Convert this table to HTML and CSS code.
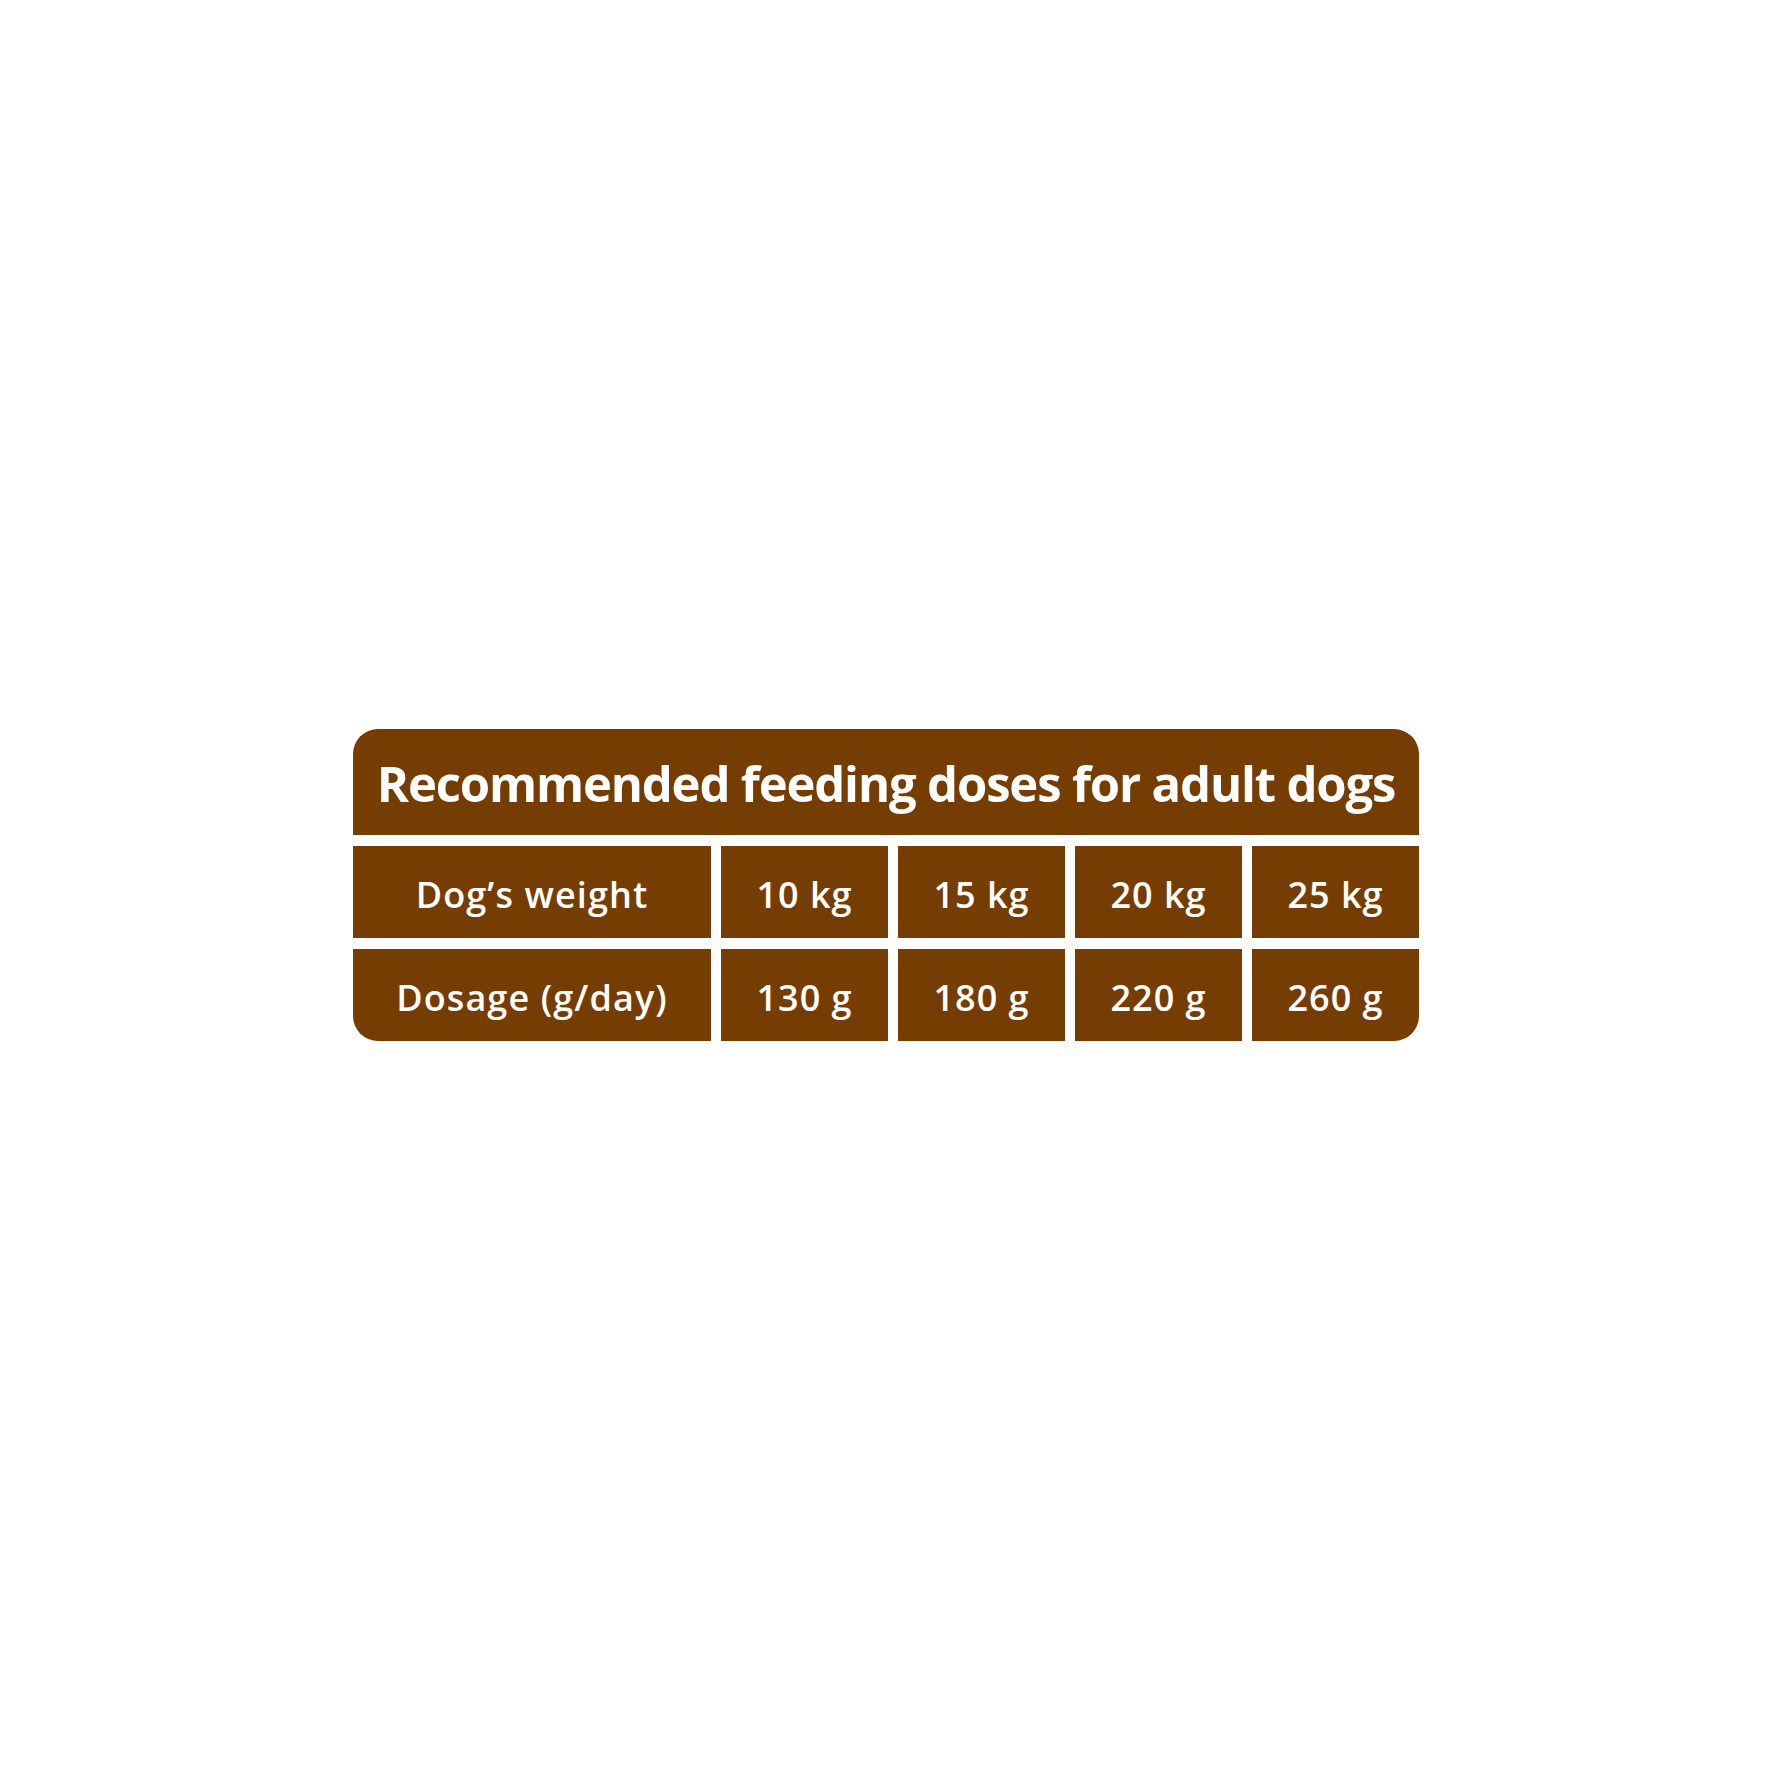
FILE: index.html
```html
<!DOCTYPE html>
<html lang="en">
<head>
<meta charset="utf-8">
<title>Recommended feeding doses</title>
<link rel="stylesheet" href="styles.css">
</head>
<body>
<div class="page">
  <div class="dose-table">
    <div class="title">Recommended feeding doses for adult dogs</div>
    <div class="grid">
      <div class="cell label">Dog’s weight</div>
      <div class="cell">10 kg</div>
      <div class="cell">15 kg</div>
      <div class="cell">20 kg</div>
      <div class="cell">25 kg</div>
      <div class="cell label bl">Dosage (g/day)</div>
      <div class="cell">130 g</div>
      <div class="cell">180 g</div>
      <div class="cell">220 g</div>
      <div class="cell br">260 g</div>
    </div>
  </div>
</div>
</body>
</html>
```
FILE: styles.css
```css
html, body {
  margin: 0;
  padding: 0;
  background: #ffffff;
}
.page {
  width: 1772px;
  height: 1772px;
  box-sizing: border-box;
  padding: 729px 0 0 353px;
  font-family: "Open Sans", "Noto Sans", sans-serif;
  color: #ffffff;
}
.dose-table {
  width: 1066px;
  display: flex;
  flex-direction: column;
  gap: 11px;
}
.title {
  height: 106px;
  background: #763d02;
  border-radius: 25px 25px 0 0;
  display: flex;
  align-items: center;
  justify-content: center;
  font-weight: 700;
  font-size: 49px;
  letter-spacing: -1.15px;
  padding-top: 2px;
  box-sizing: border-box;
}
.grid {
  display: grid;
  grid-template-columns: 358px repeat(4, 1fr);
  grid-auto-rows: 92px;
  column-gap: 10px;
  row-gap: 11px;
}
.cell {
  background: #763d02;
  display: flex;
  align-items: center;
  justify-content: center;
  font-weight: 600;
  font-size: 36px;
  letter-spacing: 1px;
  padding-top: 4px;
  box-sizing: border-box;
}
.label {
  letter-spacing: 1.1px;
}
.bl {
  border-bottom-left-radius: 25px;
}
.br {
  border-bottom-right-radius: 25px;
}
```
